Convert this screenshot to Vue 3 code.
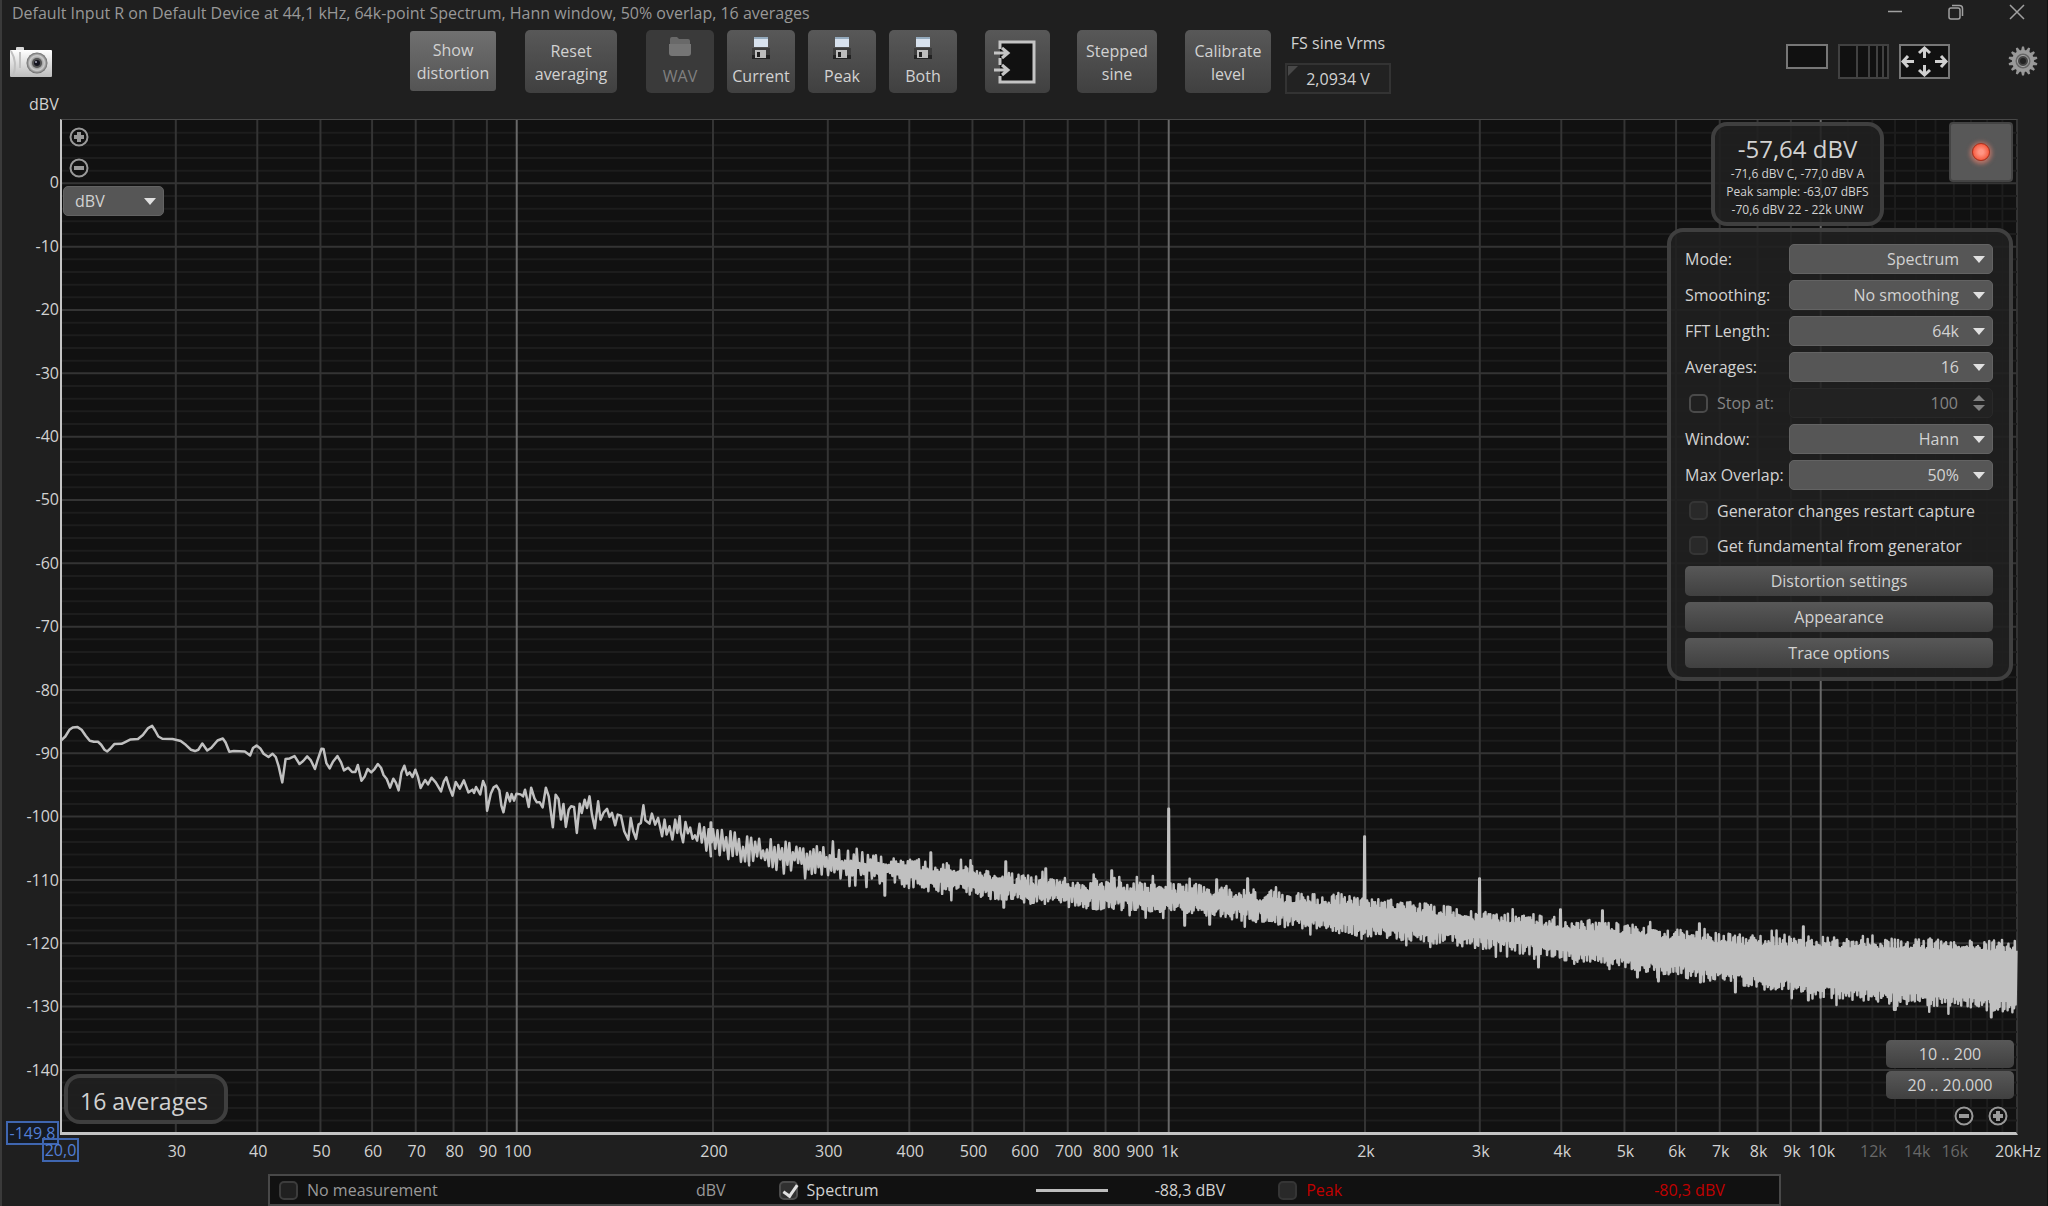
<script setup>
import { ref } from 'vue'

const DB_TOP = 10
const DB_SPAN = 159.8
const yPct = (db) => ((DB_TOP - db) / DB_SPAN) * 100
const xPct = (hz) => (Math.log10(hz / 20) / 3) * 100

const range = (from, to, step) => {
  const out = []
  for (let v = from; v <= to; v += step) out.push(v)
  return out
}

const dbMajor = range(-140, 0, 10)
const dbMinor = range(-148, 8, 2).filter((v) => v % 10 !== 0)
const hzDecade = [100, 1000, 10000]
const hzMajor = [
  ...range(30, 90, 10),
  ...range(200, 900, 100),
  ...range(2000, 9000, 1000),
]
const hzMinor = range(11000, 19000, 1000)

const hzLabels = [
  ...[30, 40, 50, 60, 70, 80, 90, 100, 200, 300, 400, 500, 600, 700, 800, 900].map((hz) => ({ hz, text: String(hz) })),
  ...range(1000, 10000, 1000).map((hz) => ({ hz, text: hz / 1000 + 'k' })),
  ...[12000, 14000, 16000].map((hz) => ({ hz, text: hz / 1000 + 'k', dim: true })),
  { hz: 20000, text: '20kHz' },
]

/* Trace space is 1957 x 1014 units. Individual bins are resolved up to about 180 Hz. */
const lowBins = [
  52, 122, 62, 110, 72, 90, 80, 83, 92, 82, 102, 90, 112, 108, 122, 123, 132, 126, 142, 126, 150, 135, 158, 150,
  165, 155, 172, 147, 182, 133, 200, 132, 210, 126, 222, 119, 240, 118, 252, 106, 265, 85, 275, 78, 282, 92,
  290, 110, 300, 117, 325, 118, 345, 124, 358, 136, 370, 150, 380, 154, 388, 150, 398, 131, 410, 152, 420, 144,
  435, 122, 448, 116, 455, 128, 464, 156, 475, 154, 502, 155, 515, 167, 522, 145, 531, 137, 540, 146, 548, 162,
  560, 172, 570, 162, 578, 172, 585, 200, 594, 248, 602, 178, 612, 176, 624, 169, 636, 193, 645, 184, 655, 170,
  664, 182, 674, 208, 680, 182, 690, 147, 695, 148, 702, 190, 710, 206, 718, 186, 729, 169, 738, 188, 745, 212,
  755, 204, 765, 217, 773, 217, 779, 196, 788, 243, 796, 230, 803, 208, 812, 218, 820, 208, 828, 193, 836, 204,
  842, 226, 850, 238, 858, 264, 866, 237, 872, 248, 879, 272, 886, 218, 893, 198, 900, 226, 906, 218, 913, 232,
  920, 210, 926, 230, 933, 265, 944, 241, 951, 254, 960, 234, 970, 248, 983, 275, 990, 245, 996, 233, 1003, 262,
  1011, 288, 1019, 247, 1029, 267, 1039, 242, 1050, 278, 1060, 270, 1064, 280, 1069, 262, 1079, 284, 1086, 244,
  1092, 262, 1096, 333, 1105, 282, 1112, 263, 1119, 258, 1126, 272, 1131, 318, 1136, 338, 1145, 280, 1152, 305,
  1156, 283, 1162, 303, 1168, 282, 1178, 284, 1184, 290, 1189, 270, 1198, 322, 1204, 264, 1212, 296, 1218, 308,
  1225, 308, 1232, 323, 1240, 264, 1247, 290, 1257, 383, 1264, 285, 1271, 298, 1277, 360, 1283, 313, 1289, 382,
  1296, 330, 1302, 320, 1309, 322, 1316, 400, 1323, 312, 1328, 340, 1335, 300, 1341, 325, 1347, 290, 1353, 345,
  1360, 386, 1368, 305, 1374, 360, 1382, 338, 1390, 328, 1396, 352, 1402, 340, 1410, 377, 1416, 345, 1424, 348,
  1432, 395, 1442, 420, 1448, 355, 1454, 395, 1461, 418, 1467, 375, 1473, 370, 1479, 317, 1484, 362, 1494, 372,
  1500, 342, 1508, 375, 1515, 355, 1525, 410, 1531, 360, 1536, 405, 1543, 380, 1550, 420, 1557, 360, 1562, 400,
  1568, 350,
]

/* Noise floor envelope above that: x, upper edge, lower edge. */
const envelope = [
  [619, 700, 722], [653, 711, 739], [682, 716, 744], [726, 724, 752], [771, 730, 758], [816, 737, 761],
  [856, 742, 770], [900, 749, 774], [945, 756, 781], [990, 761, 785], [1048, 765, 790], [1106, 766, 793],
  [1159, 770, 797], [1226, 776, 806], [1239, 776, 809], [1304, 780, 816], [1363, 786, 822], [1419, 795, 828],
  [1478, 799, 836], [1525, 803, 843], [1573, 808, 850], [1621, 813, 857], [1668, 817, 864], [1716, 820, 869],
  [1761, 820, 877], [1835, 822, 883], [1907, 824, 888], [1957, 824, 893],
]

/* Harmonics and single bins that stand clear of the floor. */
const peaks = [
  [650, 704], [688, 743], [824, 777], [870, 734], [943, 789], [945, 743], [985, 750], [1051, 752], [1108, 690],
  [1124, 807], [1149, 806], [1156, 761], [1187, 760], [1304, 718], [1419, 760], [1478, 849], [1500, 791],
  [1542, 792], [1577, 859], [1598, 863], [1639, 805], [1640, 864], [1675, 874], [1743, 808], [1748, 882], [1931, 899],
]

function buildTrace() {
  let seed = 20443
  const rnd = () => {
    seed = (seed * 1103515245 + 12345) % 2147483648
    return seed / 2147483648
  }
  const pts = []
  for (let i = 0; i < lowBins.length; i += 2) {
    pts.push([lowBins[i] / 2.45 - 21, 581 + lowBins[i + 1] / 3])
  }
  let seg = 0
  let up = true
  let nextPeak = 0
  for (let x = 620; x < 1957; x += x < 900 ? 2.4 - (x - 620) / 180 : 0.8) {
    while (seg < envelope.length - 2 && x > envelope[seg + 1][0]) seg++
    const [x0, t0, b0] = envelope[seg]
    const [x1, t1, b1] = envelope[seg + 1]
    const k = (x - x0) / (x1 - x0)
    const top = t0 + (t1 - t0) * k
    const bottom = b0 + (b1 - b0) * k
    const r = rnd()
    const stray = rnd() > 0.93 ? 7 : 0
    const depth = x < 900 ? 16 - (x - 620) / 60 : 12
    const y = up ? top - 2 - stray + r * depth : bottom + 2 + stray - r * depth
    pts.push([x, y])
    if (nextPeak < peaks.length && x >= peaks[nextPeak][0]) {
      const mid = (top + bottom) / 2
      const [px, py] = peaks[nextPeak]
      pts.push([px - 0.5, mid], [px, py], [px + 0.5, py], [px + 1, mid])
      nextPeak++
    }
    up = !up
  }
  return 'M' + pts.map(([x, y]) => x.toFixed(1) + ' ' + y.toFixed(1)).join('L')
}
const trace = buildTrace()

const fields = [
  { id: 'mode', label: 'Mode:', value: 'Spectrum' },
  { id: 'smoothing', label: 'Smoothing:', value: 'No smoothing' },
  { id: 'fft', label: 'FFT Length:', value: '64k' },
  { id: 'averages', label: 'Averages:', value: '16' },
  { id: 'stop', label: 'Stop at:', value: '100', spinner: true },
  { id: 'window', label: 'Window:', value: 'Hann' },
  { id: 'overlap', label: 'Max Overlap:', value: '50%' },
]

const legend = ref([
  { id: 'none', name: 'No measurement', value: 'dBV', kind: 'muted', checked: false },
  { id: 'spectrum', name: 'Spectrum', value: '-88,3 dBV', kind: 'live', checked: true, line: true },
  { id: 'peak', name: 'Peak', value: '-80,3 dBV', kind: 'peak', checked: false },
])
const fsSine = ref('2,0934 V')
const restart = ref(false)
const fundamental = ref(false)
</script>

<template>
  <div class="app">
    <header class="titlebar">
      <h1>Default Input R on Default Device at 44,1 kHz, 64k-point Spectrum, Hann window, 50% overlap, 16 averages</h1>
      <div class="window-controls">
        <button aria-label="Minimize"><svg width="16" height="16" viewBox="0 0 16 16"><path d="M1 7.5h14" /></svg></button>
        <button aria-label="Restore"><svg width="16" height="16" viewBox="0 0 16 16"><rect x="1" y="4" width="11" height="11" rx="2" /><path d="M4 1.5h7.500q3 0 3 3V12" /></svg></button>
        <button aria-label="Close"><svg width="16" height="16" viewBox="0 0 16 16"><path d="M1 1l14 14M15 1L1 15" /></svg></button>
      </div>
    </header>

    <nav class="toolbar">
      <button class="icon-button camera" aria-label="Capture image">
        <svg width="42" height="32" viewBox="0 0 42 32">
          <defs>
            <linearGradient id="cam-body" x1="0" y1="0" x2="0" y2="1"><stop offset="0" stop-color="#fff" /><stop offset="1" stop-color="#bdbdbd" /></linearGradient>
            <radialGradient id="cam-lens"><stop offset="0.3" stop-color="#777" /><stop offset="0.7" stop-color="#ccc" /><stop offset="1" stop-color="#666" /></radialGradient>
          </defs>
          <rect x="6" y="1" width="8" height="5" rx="1" fill="#d8d8d8" />
          <rect x="0" y="4" width="42" height="27" rx="1" fill="url(#cam-body)" />
          <path d="M1 5q7 12 2 25M10 6v16" stroke="#c0c0c0" stroke-width="2" fill="none" />
          <circle cx="27" cy="17" r="10.500" fill="url(#cam-lens)" />
          <circle cx="27" cy="17" r="5" fill="#555" />
          <circle cx="27" cy="17" r="3" fill="#15151f" />
          <circle cx="26" cy="16" r="1" fill="#aab" />
        </svg>
      </button>
      <button class="tool distortion">Show<br />distortion</button>
      <button class="tool reset">Reset<br />averaging</button>
      <div class="save-group">
        <button class="tool save" disabled>
          <svg width="24" height="20" viewBox="0 0 24 20"><path d="M2 2q0-2 2-2h5l2 2h9q2 0 2 2v3H2z" fill="#696969" /><path d="M1 7h22v9q0 3-3 3H4q-3 0-3-3z" fill="#757575" /></svg>
          WAV
        </button>
        <button v-for="name in ['Current', 'Peak', 'Both']" :key="name" class="tool save">
          <svg width="20" height="22" viewBox="0 0 20 22">
            <path d="M1 11h18v11H1z" fill="#3c3c3c" /><path d="M1 18h18v4H1z" fill="#222" />
            <path d="M3 0h14v10H3z" fill="#d8e2ee" /><path d="M3 0h14v2H3z" fill="#94aabd" />
            <path d="M4 13h11v8H4z" fill="#bdbdbd" /><path d="M6 15h3v5H6z" fill="#222" />
          </svg>
          {{ name }}
        </button>
      </div>
      <button class="tool input-button" aria-label="Input to plot">
        <svg width="44" height="44" viewBox="0 0 44 44">
          <path d="M6 2h34v40H6z" fill="#111" />
          <path d="M6 9V2h34v40H6v-6M6 18v7" fill="none" stroke="#c4c4c4" stroke-width="3" />
          <path d="M0 13h13M8 8l6 5-6 5M0 30h13M8 25l6 5-6 5" fill="none" stroke="#c4c4c4" stroke-width="3" />
        </svg>
      </button>
      <button class="tool stepped">Stepped<br />sine</button>
      <button class="tool calibrate">Calibrate<br />level</button>
      <div class="fs">
        <label for="fs-sine">FS sine Vrms</label>
        <div class="fs-box"><input id="fs-sine" v-model="fsSine" type="text" /></div>
      </div>
      <div class="view-tools">
        <button class="icon-button" aria-label="Plain view"><svg width="42" height="25" viewBox="0 0 42 25"><path d="M1 1h40v23H1z" fill="#111" stroke="#777" stroke-width="2" /></svg></button>
        <button class="icon-button" aria-label="Logarithmic axis"><svg width="51" height="35" viewBox="0 0 51 35"><path d="M1 1h49v33H1zM19 1v33M31 1v33M39 1v33M45 1v33" fill="#111" stroke="#414141" stroke-width="2" /></svg></button>
        <button class="icon-button" aria-label="Fit view">
          <svg width="51" height="35" viewBox="0 0 51 35">
            <path d="M1 1h49v33H1z" fill="#111" stroke="#777" stroke-width="2" />
            <path d="M15 17.500H4M9 12l-5 5.500 5 5.500M36 17.500h11M42 12l5 5.500-5 5.500M25.500 14V4M20 9l5.500-5L31 9M25.500 21v10M20 26l5.500 5 5.500-5" fill="none" stroke="#d0d0d0" stroke-width="3" />
          </svg>
        </button>
        <button class="icon-button gear" aria-label="Settings">
          <svg width="30" height="30" viewBox="-15 -15 30 30">
            <path v-for="n in 14" :key="n" d="M-2-10l1-4.500h2L2-10z" fill="#969696" :transform="`rotate(${(n * 360) / 14})`" />
            <circle r="11" fill="#9a9a9a" /><circle r="7.500" fill="#666" /><circle r="5.500" fill="#444" stroke="#aaa" stroke-width="1" /><circle r="3" fill="#222" />
          </svg>
        </button>
      </div>
    </nav>

    <main class="graph">
      <div class="unit">dBV</div>
      <div class="y-axis">
        <span v-for="db in dbMajor" :key="db" class="y-label" :style="{ top: yPct(db) + '%' }">{{ db }}</span>
        <span class="limit limit-y">-149,8</span>
      </div>
      <section class="plot">
        <svg class="grid" aria-hidden="true">
          <line v-for="hz in hzMinor" :key="'m' + hz" class="minor" :x1="xPct(hz) + '%'" :x2="xPct(hz) + '%'" y1="0" y2="100%" />
          <line v-for="db in dbMinor" :key="'n' + db" class="minor" x1="0" x2="100%" :y1="yPct(db) + '%'" :y2="yPct(db) + '%'" />
          <line v-for="db in dbMajor" :key="'d' + db" class="major" x1="0" x2="100%" :y1="yPct(db) + '%'" :y2="yPct(db) + '%'" />
          <line v-for="hz in hzMajor" :key="'h' + hz" class="major" :x1="xPct(hz) + '%'" :x2="xPct(hz) + '%'" y1="0" y2="100%" />
          <line v-for="hz in hzDecade" :key="'x' + hz" class="decade" :x1="xPct(hz) + '%'" :x2="xPct(hz) + '%'" y1="0" y2="100%" />
          <line class="axis" x1="0" x2="0" y1="0" y2="100%" />
        </svg>
        <svg class="grid" viewBox="0 0 1957 1014" preserveAspectRatio="none" role="img" aria-label="Spectrum trace">
          <path class="trace" :d="trace" vector-effect="non-scaling-stroke" />
        </svg>

        <div class="y-tools">
          <button class="zoom" aria-label="Zoom in level"><svg width="20" height="20" viewBox="0 0 20 20"><circle cx="10" cy="10" r="8.500" /><path d="M10 5v10M5 10h10" /></svg></button>
          <button class="zoom" aria-label="Zoom out level"><svg width="20" height="20" viewBox="0 0 20 20"><circle cx="10" cy="10" r="8.500" /><path d="M5 10h10" /></svg></button>
          <div class="select unit-select"><select aria-label="Level unit"><option>dBV</option></select></div>
        </div>

        <div class="averages">16 averages</div>

        <div class="overlay">
          <div class="overlay-top">
            <div class="level">
              <strong>-57,64 dBV</strong>
              <span>-71,6 dBV C, -77,0 dBV A</span>
              <span>Peak sample: -63,07 dBFS</span>
              <span>-70,6 dBV 22 - 22k UNW</span>
            </div>
            <button class="record" aria-label="Record"><i></i></button>
          </div>
          <form class="settings" @submit.prevent>
            <div v-for="f in fields" :key="f.id" class="field" :class="{ off: f.spinner }">
              <div class="field-label">
                <input v-if="f.spinner" id="stop-on" type="checkbox" disabled />
                <label :for="f.spinner ? 'stop-on' : f.id">{{ f.label }}</label>
              </div>
              <div v-if="f.spinner" class="spinner"><input type="text" :id="f.id" :value="f.value" aria-label="Stop at" disabled /></div>
              <div v-else class="select"><select :id="f.id"><option>{{ f.value }}</option></select></div>
            </div>
            <div class="check"><input id="restart" v-model="restart" type="checkbox" /><label for="restart">Generator changes restart capture</label></div>
            <div class="check"><input id="fundamental" v-model="fundamental" type="checkbox" /><label for="fundamental">Get fundamental from generator</label></div>
            <button class="wide">Distortion settings</button>
            <button class="wide">Appearance</button>
            <button class="wide">Trace options</button>
          </form>
        </div>

        <div class="x-tools">
          <button class="wide preset">10 .. 200</button>
          <button class="wide preset">20 .. 20.000</button>
          <div class="x-zoom">
            <button class="zoom" aria-label="Zoom out frequency"><svg width="20" height="20" viewBox="0 0 20 20"><circle cx="10" cy="10" r="8.500" /><path d="M5 10h10" /></svg></button>
            <button class="zoom" aria-label="Zoom in frequency"><svg width="20" height="20" viewBox="0 0 20 20"><circle cx="10" cy="10" r="8.500" /><path d="M10 5v10M5 10h10" /></svg></button>
          </div>
        </div>
      </section>
      <div class="x-axis">
        <span class="limit limit-x">20,0</span>
        <span v-for="l in hzLabels" :key="l.hz" class="x-label" :class="{ dim: l.dim }" :style="{ left: xPct(l.hz) + '%' }">{{ l.text }}</span>
      </div>
    </main>

    <footer class="legend">
      <div v-for="item in legend" :key="item.id" class="entry" :class="item.kind">
        <input :id="'trace-' + item.id" v-model="item.checked" type="checkbox" />
        <label :for="'trace-' + item.id">{{ item.name }}</label>
        <i v-if="item.line" class="swatch"></i>
        <output>{{ item.value }}</output>
      </div>
    </footer>
  </div>
</template>

<style>
body {
  background: #1f1f1f;
}
</style>

<style scoped>
* {
  box-sizing: border-box;
}
.app {
  display: flex;
  flex-direction: column;
  min-height: 100vh;
  border-left: 2px solid #3a3a3a;
  border-right: 1px solid #111;
  background: #1f1f1f;
  color: #d2d2d2;
  font: 16px/22px "Open Sans", "Noto Sans", sans-serif;
}
button,
input,
select {
  margin: 0;
  padding: 0;
  border: 0;
  color: inherit;
  font: inherit;
}
button {
  background: none;
}
svg {
  display: block;
}
.titlebar {
  display: flex;
  justify-content: space-between;
  align-items: flex-start;
  height: 30px;
  padding: 2px 22px 0 10px;
}
h1 {
  margin: 0;
  color: #989898;
  font-size: 16px;
  font-weight: 400;
}
.window-controls {
  display: flex;
  gap: 45px;
  padding-top: 2px;
}
.window-controls svg {
  fill: none;
  stroke: #a0a0a0;
  stroke-width: 1.5;
}
.toolbar {
  display: flex;
  align-items: flex-start;
  height: 63px;
  padding-left: 8px;
}
.camera {
  margin: 16px 358px 0 0;
}
.tool {
  height: 63px;
  padding-top: 2px;
  border-radius: 5px;
  background: linear-gradient(#585858, #404040);
  line-height: 23px;
}
.distortion {
  width: 86px;
  height: 60px;
  margin: 1px 29px 0 0;
  border-radius: 3px;
  background: linear-gradient(#707070, #545454);
}
.reset {
  width: 92px;
  margin-right: 29px;
}
.save-group {
  display: flex;
  gap: 13px;
  margin-right: 28px;
}
.save {
  display: flex;
  flex-direction: column;
  align-items: center;
  justify-content: space-between;
  width: 68px;
  padding: 7px 0 5px;
}
.save:disabled {
  background: #3a3a3a;
  color: #808080;
}
.input-button {
  width: 65px;
  margin-right: 27px;
  padding: 0 0 0 9px;
}
.stepped {
  width: 80px;
  margin-right: 28px;
}
.calibrate {
  width: 86px;
  margin-right: 14px;
}
.fs {
  display: flex;
  flex-direction: column;
  justify-content: space-between;
  width: 106px;
  height: 64px;
  padding-top: 2px;
  text-align: center;
  white-space: nowrap;
}
.fs-box {
  position: relative;
}
.fs-box::before {
  content: "";
  position: absolute;
  top: 3px;
  left: 3px;
  border: 5px solid transparent;
  border-top-color: #484848;
  border-left-color: #484848;
}
.fs input {
  display: block;
  width: 100%;
  height: 31px;
  border: 2px solid #333;
  background: #222;
  text-align: center;
}
.view-tools {
  display: flex;
  align-items: flex-start;
  gap: 10px;
  margin: 14px 9px 0 auto;
}
.gear {
  margin: 2px 0 0 48px;
}
.graph {
  flex: 1;
  display: grid;
  grid-template-columns: 58px 1fr 29px;
  grid-template-rows: 26px minmax(700px, 1fr) 39px;
}
.unit {
  grid-column: 1 / -1;
  padding-left: 27px;
  line-height: 22px;
}
.y-axis,
.x-axis,
.plot {
  position: relative;
}
.y-axis {
  margin-bottom: 3px;
}
.y-label {
  position: absolute;
  right: 1px;
  line-height: 20px;
  transform: translateY(-50%);
}
.plot {
  border-left: 2px solid #c4c4c4;
  border-bottom: 3px solid #c4c4c4;
  border-top: 1px solid #484848;
  border-right: 2px solid #333;
  background: #111;
}
.grid {
  position: absolute;
  top: 0;
  left: -1px;
  width: calc(100% + 2px);
  height: 100%;
  overflow: visible;
}
.minor {
  stroke: #1d1d1d;
  stroke-width: 2;
}
.major {
  stroke: #343434;
  stroke-width: 2;
}
.decade {
  stroke: #686868;
  stroke-width: 2;
}
.axis {
  stroke: #c4c4c4;
  stroke-width: 2;
}
.trace {
  fill: none;
  stroke: #c0c0c0;
  stroke-width: 2.5;
  stroke-linejoin: round;
}
.x-axis {
  grid-column: 2;
  margin-left: 2px;
}
.x-label {
  position: absolute;
  top: 6px;
  line-height: 20px;
  transform: translateX(-50%);
}
.dim {
  color: #686868;
}
.limit {
  position: absolute;
  z-index: 1;
  border: 2px solid #3f66b0;
  background: #151a22;
  color: #527fd6;
  line-height: 20px;
  text-align: center;
}
.limit-y {
  right: 1px;
  bottom: -13px;
  width: 53px;
}
.limit-x {
  top: 3px;
  left: -20px;
  width: 37px;
  background: none;
}
.y-tools {
  position: absolute;
  top: 7px;
  left: 1px;
  display: flex;
  flex-direction: column;
  align-items: flex-start;
  gap: 11px;
}
.zoom {
  border-radius: 10px;
  background: #111;
}
.y-tools .zoom {
  margin-left: 6px;
}
.zoom svg {
  fill: none;
  stroke: #999;
  stroke-width: 2;
}
.zoom path {
  stroke-width: 4;
}
.select,
.spinner {
  position: relative;
  height: 30px;
}
.select select {
  width: 100%;
  height: 100%;
  padding: 0 33px 0 11px;
  border: 1px solid #636363;
  border-radius: 5px;
  background: #565656;
  appearance: none;
  text-align: right;
  text-align-last: right;
}
.select::after {
  content: "";
  position: absolute;
  top: 12px;
  right: 8px;
  border: 6px solid transparent;
  border-top: 7px solid #e0e0e0;
  border-bottom: 0;
  pointer-events: none;
}
.unit-select {
  width: 101px;
  margin-top: -3px;
}
.unit-select select {
  text-align: left;
  text-align-last: left;
}
.averages {
  position: absolute;
  bottom: 8px;
  left: 2px;
  padding: 7px 16px 3px 12px;
  border: 4px solid #3f3f3f;
  border-radius: 16px;
  background: rgba(32, 32, 32, 0.9);
  font-size: 23px;
  line-height: 32px;
}
.overlay {
  position: absolute;
  top: 2px;
  right: 3px;
  display: flex;
  flex-direction: column;
  gap: 2px;
  width: 346px;
}
.overlay-top {
  display: flex;
  justify-content: flex-end;
  align-items: flex-start;
  gap: 65px;
}
.level {
  display: flex;
  flex-direction: column;
  align-items: center;
  width: 173px;
  height: 104px;
  padding-top: 7px;
  border: 4px solid #3f3f3f;
  border-radius: 16px;
  background: rgba(32, 32, 32, 0.88);
  font-size: 12px;
  line-height: 18px;
  white-space: nowrap;
}
.level strong {
  font-size: 24px;
  font-weight: 400;
  line-height: 32px;
}
.record {
  display: grid;
  place-items: center;
  width: 64px;
  height: 60px;
  border: 2px solid #444;
  border-radius: 4px;
  background: #585858;
}
.record i {
  width: 18px;
  height: 18px;
  border: 1px solid #b8301a;
  border-radius: 9px;
  background: radial-gradient(#ff9684 20%, #f5583c 75%);
  box-shadow: 0 1px 4px 2px #b87468;
}
.settings {
  display: flex;
  flex-direction: column;
  gap: 6px;
  padding: 12px 16px 9px 14px;
  border: 4px solid #3f3f3f;
  border-radius: 16px;
  background: rgba(32, 32, 32, 0.88);
}
.field {
  display: grid;
  grid-template-columns: 1fr 204px;
  align-items: center;
  white-space: nowrap;
}
.field-label,
.check {
  display: flex;
  align-items: center;
  gap: 9px;
}
.off {
  color: #858585;
}
.off .field-label,
.check {
  padding-left: 4px;
}
.check {
  height: 29px;
}
.spinner input {
  width: 100%;
  height: 100%;
  padding-right: 34px;
  border: 1px solid #292929;
  border-radius: 5px;
  background: #222;
  text-align: right;
}
.spinner::before,
.spinner::after {
  content: "";
  position: absolute;
  right: 8px;
  border: 6px solid transparent;
}
.spinner::before {
  top: 7px;
  border-top: 0;
  border-bottom-color: #808080;
}
.spinner::after {
  bottom: 7px;
  border-bottom: 0;
  border-top-color: #808080;
}
input[type="checkbox"] {
  flex: none;
  width: 19px;
  height: 19px;
  border: 2px solid #353535;
  border-radius: 5px;
  background: #292929;
  appearance: none;
}
input[type="checkbox"]:disabled {
  border-color: #4a4a4a;
  background: #202020;
}
.wide {
  height: 30px;
  border-radius: 5px;
  background: linear-gradient(#585858, #404040);
}
.x-tools {
  position: absolute;
  right: 2px;
  bottom: 6px;
  display: flex;
  flex-direction: column;
  gap: 3px;
  width: 128px;
}
.preset {
  height: 28px;
}
.x-zoom {
  display: flex;
  justify-content: flex-end;
  gap: 14px;
  padding: 4px 6px 0 0;
}
.legend {
  display: flex;
  width: 74%;
  max-width: 1514px;
  height: 32px;
  margin-left: 266px;
  padding-left: 9px;
  border: 2px solid #484848;
  background: #111;
}
.entry {
  display: flex;
  align-items: center;
  width: 33.3%;
  padding-right: 53px;
}
.entry label {
  margin-left: 9px;
}
.entry output {
  margin-left: auto;
}
.entry input[type="checkbox"]:checked {
  border-color: #4c4c4c;
  background: #303030;
}
.entry input:checked::after {
  content: "";
  display: block;
  width: 6px;
  height: 12px;
  margin: -1px 0 0 5px;
  border: solid #e0e0e0;
  border-width: 0 3px 3px 0;
  transform: rotate(35deg);
}
.swatch {
  width: 72px;
  height: 3px;
  margin-left: auto;
  background: #bdbdbd;
}
.swatch + output {
  margin-left: 47px;
}
.muted {
  color: #999;
}
.muted input[type="checkbox"] {
  border-color: #3c3c3c;
  background: #202020;
}
.peak {
  color: #c00000;
}
</style>
